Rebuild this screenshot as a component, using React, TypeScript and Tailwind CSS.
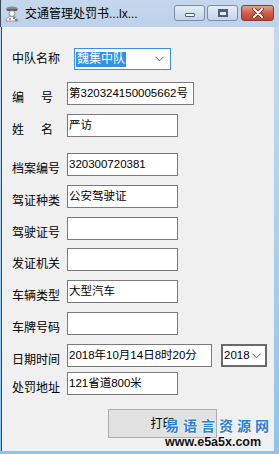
import React from "react";

const font = "font-['Liberation_Sans','Noto_Sans_CJK_SC',sans-serif]";

interface FieldProps {
  label: React.ReactNode;
  value?: string;
  width: string;
  mt: string;
}

// one label + text box row, label sits a few px lower than the box like in WinForms
const Field: React.FC<FieldProps> = ({ label, value, width, mt }) => (
  <div className={`flex items-center h-[23px] ${mt}`}>
    <div className="w-[55px] mt-[9px] text-[12px] leading-[14px] text-black">{label}</div>
    <div
      className={`${width} h-[23px] bg-white border border-[#7a7a7a] flex items-center pl-[1px] text-[11.5px] text-black whitespace-nowrap overflow-hidden`}
    >
      {value}
    </div>
  </div>
);

const Chevron = () => (
  <svg width="9" height="6" viewBox="0 0 9 6">
    <path d="M0.5 0.8 L4.5 4.8 L8.5 0.8" fill="none" stroke="#555" strokeWidth="1" />
  </svg>
);

const TitleIcon = () => (
  <svg width="17" height="17" viewBox="0 0 17 17">
    <ellipse cx="8" cy="4" rx="6" ry="2.6" fill="#8a8a8a" />
    <rect x="3" y="4" width="10" height="2" fill="#5d5d5d" />
    <circle cx="8" cy="8.5" r="3" fill="#f4f4f4" stroke="#7a7a7a" strokeWidth="0.8" />
    <path d="M2 16 Q3 11 8 11.5 Q13 11 14 16 Z" fill="#ffffff" stroke="#888" strokeWidth="0.8" />
    <rect x="9" y="12" width="2" height="2" fill="#777" />
    <rect x="11" y="14" width="2" height="2" fill="#777" />
    <rect x="5" y="13" width="2" height="2" fill="#999" />
  </svg>
);

export default function App() {
  return (
    <div
      className={`w-[279px] h-[454px] relative flex flex-col bg-gradient-to-b from-[#c9dbef] to-[#8ec4ea] overflow-hidden ${font}`}
    >
      {/* title bar */}
      <div className="h-[27px] flex items-start shrink-0 bg-gradient-to-b from-[#c5d7ec] to-[#bcd2ea] border-l border-[#3b4857]">
        <div className="ml-[3px] mt-[5px]">
          <TitleIcon />
        </div>
        <div className="ml-[4px] mt-[6px] text-[12px] leading-[16px] text-black">交通管理处罚书...lx...</div>
        <div className="ml-auto mt-[5px] flex">
          <div className="w-[31px] h-[16px] rounded-[3px] border border-[#7b8ea8] bg-gradient-to-b from-[#e4edf7] to-[#c3d5ea] flex items-end justify-center pb-[3px]">
            <div className="w-[10px] h-[4px] bg-white border border-[#4c5d74] rounded-[1px]" />
          </div>
          <div className="ml-[2px] w-[31px] h-[16px] rounded-[3px] border border-[#7b8ea8] bg-gradient-to-b from-[#e4edf7] to-[#c3d5ea] flex items-center justify-center">
            <div className="w-[10px] h-[8px] border-[2px] border-t-[3px] border-[#4c5d74] bg-[#dfe8f3]" />
          </div>
          <div className="ml-[3px] mr-[5px] w-[33px] h-[16px] rounded-[3px] border border-[#8a3a30] bg-gradient-to-b from-[#e5a08f] via-[#cf5d4b] to-[#c2402f] flex items-center justify-center">
            <svg width="12" height="10" viewBox="0 0 12 10">
              <path d="M2 1 L10 9 M10 1 L2 9" stroke="#4a1a14" strokeWidth="3.4" strokeLinecap="round" />
              <path d="M2 1 L10 9 M10 1 L2 9" stroke="#ffffff" strokeWidth="2" strokeLinecap="round" />
            </svg>
          </div>
        </div>
      </div>

      {/* client area */}
      <div className="flex-1 ml-[1px] mr-[5px] mb-[3px] border-l border-[#3b4857] bg-[#f0f0f0] flex flex-col pl-[10px]">
        <div className="flex items-center h-[22px] mt-[21px]">
          <div className="w-[62px] text-[12px] leading-[14px] text-black">中队名称</div>
          <div className="w-[97px] h-[22px] bg-white border border-[#3c8fe0] flex items-center pl-[1px] pr-[6px]">
            <span className="bg-[#3390ec] text-white text-[12px] leading-[15px] px-[1px]">魏集中队</span>
            <span className="ml-auto">
              <Chevron />
            </span>
          </div>
        </div>

        <Field
          mt="mt-[12px]"
          width="w-[127px]"
          label={
            <span className="flex justify-between w-[41px]">
              <span>编</span>
              <span>号</span>
            </span>
          }
          value="第320324150005662号"
        />
        <Field
          mt="mt-[9px]"
          width="w-[111px]"
          label={
            <span className="flex justify-between w-[41px]">
              <span>姓</span>
              <span>名</span>
            </span>
          }
          value="严访"
        />
        <Field mt="mt-[16px]" width="w-[111px]" label="档案编号" value="320300720381" />
        <Field mt="mt-[9px]" width="w-[111px]" label="驾证种类" value="公安驾驶证" />
        <Field mt="mt-[9px]" width="w-[111px]" label="驾驶证号" />
        <Field mt="mt-[8px]" width="w-[111px]" label="发证机关" />
        <Field mt="mt-[9px]" width="w-[111px]" label="车辆类型" value="大型汽车" />
        <Field mt="mt-[9px]" width="w-[111px]" label="车牌号码" />

        <div className="flex items-center h-[23px] mt-[9px]">
          <div className="w-[55px] mt-[9px] text-[12px] leading-[14px] text-black">日期时间</div>
          <div className="w-[145px] h-[23px] bg-white border border-[#7a7a7a] flex items-center pl-[1px] text-[11.5px] text-black whitespace-nowrap">
            2018年10月14日8时20分
          </div>
          <div className="ml-[9px] w-[46px] h-[23px] bg-white border-2 border-[#6a6a6a] flex items-center pl-[1px] pr-[4px] text-[11.5px] text-black">
            2018
            <span className="ml-auto">
              <Chevron />
            </span>
          </div>
        </div>

        <Field mt="mt-[5px]" width="w-[111px]" label="处罚地址" value="121省道800米" />

        <div className="mt-[14px] ml-[96px] w-[109px] h-[29px] bg-[#e1e1e1] border border-[#adadad] flex items-center justify-center text-[12px] text-black">
          打印
        </div>
      </div>

      {/* site watermark over the corner */}
      <div className="absolute left-[165px] top-[417px] flex flex-col items-start pointer-events-none">
        <div className="text-[14px] leading-[16px] font-bold tracking-[4px] text-[#2b7fd6] [text-shadow:0_0_2px_#fff,0_0_2px_#fff] font-['Noto_Sans_CJK_SC',sans-serif]">
          易语言资源网
        </div>
        <div className="mt-[2px] text-[12.5px] leading-[14px] font-bold text-[#111] [text-shadow:0_0_2px_#fff] font-['Liberation_Sans',sans-serif]">
          www.e5a5x.com
        </div>
      </div>
    </div>
  );
}
